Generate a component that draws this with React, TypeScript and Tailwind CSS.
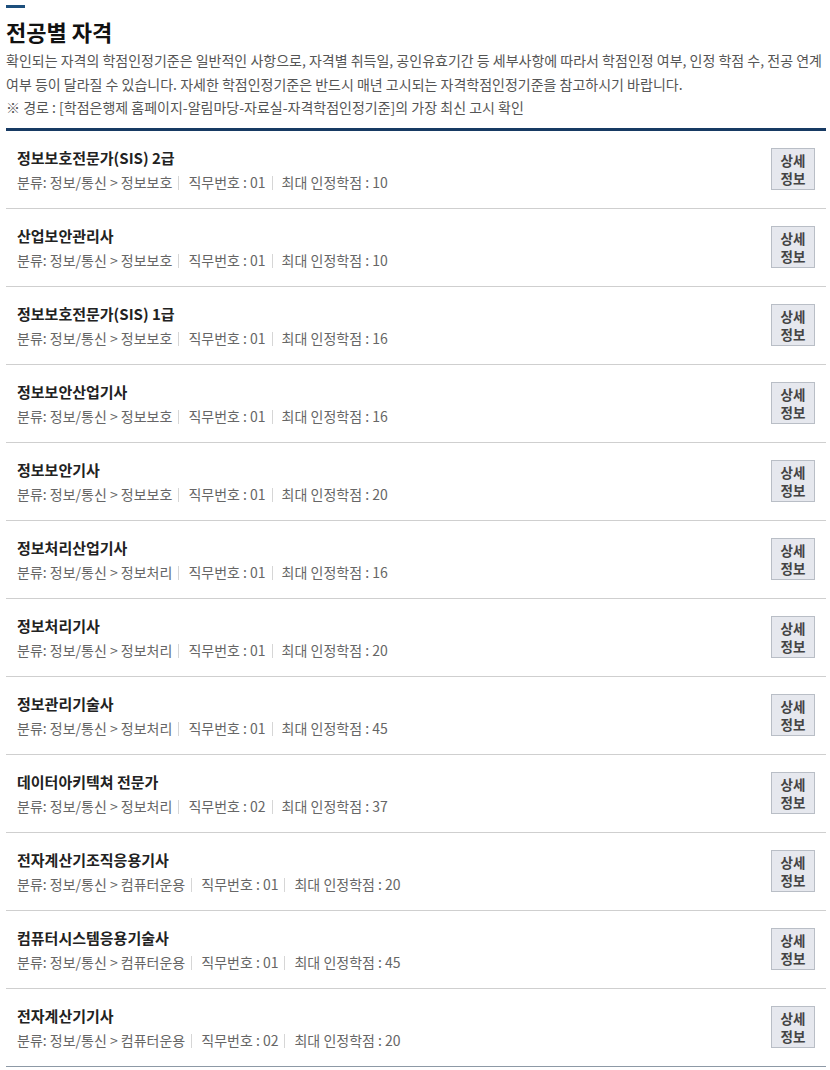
import React from "react";

const items = [
  { name: "정보보호전문가(SIS) 2급", cat: "정보/통신 > 정보보호", no: "01", credit: "10" },
  { name: "산업보안관리사", cat: "정보/통신 > 정보보호", no: "01", credit: "10" },
  { name: "정보보호전문가(SIS) 1급", cat: "정보/통신 > 정보보호", no: "01", credit: "16" },
  { name: "정보보안산업기사", cat: "정보/통신 > 정보보호", no: "01", credit: "16" },
  { name: "정보보안기사", cat: "정보/통신 > 정보보호", no: "01", credit: "20" },
  { name: "정보처리산업기사", cat: "정보/통신 > 정보처리", no: "01", credit: "16" },
  { name: "정보처리기사", cat: "정보/통신 > 정보처리", no: "01", credit: "20" },
  { name: "정보관리기술사", cat: "정보/통신 > 정보처리", no: "01", credit: "45" },
  { name: "데이터아키텍쳐 전문가", cat: "정보/통신 > 정보처리", no: "02", credit: "37" },
  { name: "전자계산기조직응용기사", cat: "정보/통신 > 컴퓨터운용", no: "01", credit: "20" },
  { name: "컴퓨터시스템응용기술사", cat: "정보/통신 > 컴퓨터운용", no: "01", credit: "45" },
  { name: "전자계산기기사", cat: "정보/통신 > 컴퓨터운용", no: "02", credit: "20" },
];

const font = { fontFamily: '"Noto Sans CJK KR", "Noto Sans", sans-serif' };

function Sep() {
  return <span className="inline-block w-px h-[14px] bg-[#d6d6d6] ml-[6px] mr-[9px] align-[-2px]" />;
}

export default function App() {
  return (
    <div className="bg-white w-[830px] min-h-[1070px]" style={font}>
      <div className="ml-[6px] w-[820px] pt-[5px]">
        <div className="w-[19px] h-[3px] bg-[#1d4f7c]" />
        <h2 className="mt-[9px] text-[22px] leading-[28px] font-bold text-[#111]">전공별 자격</h2>
        <div className="mt-[4px] text-[14px] leading-[23.5px] text-[#555]">
          <p>
            확인되는 자격의 학점인정기준은 일반적인 사항으로, 자격별 취득일, 공인유효기간 등 세부사항에 따라서 학점인정 여부, 인정 학점 수, 전공 연계 여부 등이 달라질 수 있습니다. 자세한 학점인정기준은 반드시 매년 고시되는 자격학점인정기준을 참고하시기 바랍니다.
          </p>
          <p>※ 경로 : [학점은행제 홈페이지-알림마당-자료실-자격학점인정기준]의 가장 최신 고시 확인</p>
        </div>
        <div className="mt-[8px] h-[3px] bg-[#173a63]" />
        <ul>
          {items.map((it, i) => (
            <li
              key={i}
              className={`flex items-center justify-between h-[78px] pl-[11px] pr-[11px] border-b ${
                i === items.length - 1 ? "border-[#8d99a6]" : "border-[#cfcfcf]"
              }`}
            >
              <div className="pt-[2px]">
                <div className="text-[15px] leading-[24px] font-bold text-[#222]">{it.name}</div>
                <div className="text-[14px] leading-[24px] text-[#666]">
                  분류: {it.cat}
                  <Sep />
                  직무번호 : {it.no}
                  <Sep />
                  최대 인정학점 : {it.credit}
                </div>
              </div>
              <button className="w-[44px] h-[42px] bg-[#e6e8ee] border border-[#b9bec6] text-[13.5px] leading-[18px] font-bold text-[#444] flex flex-col items-center justify-center">
                <span>상세</span>
                <span>정보</span>
              </button>
            </li>
          ))}
        </ul>
      </div>
    </div>
  );
}
